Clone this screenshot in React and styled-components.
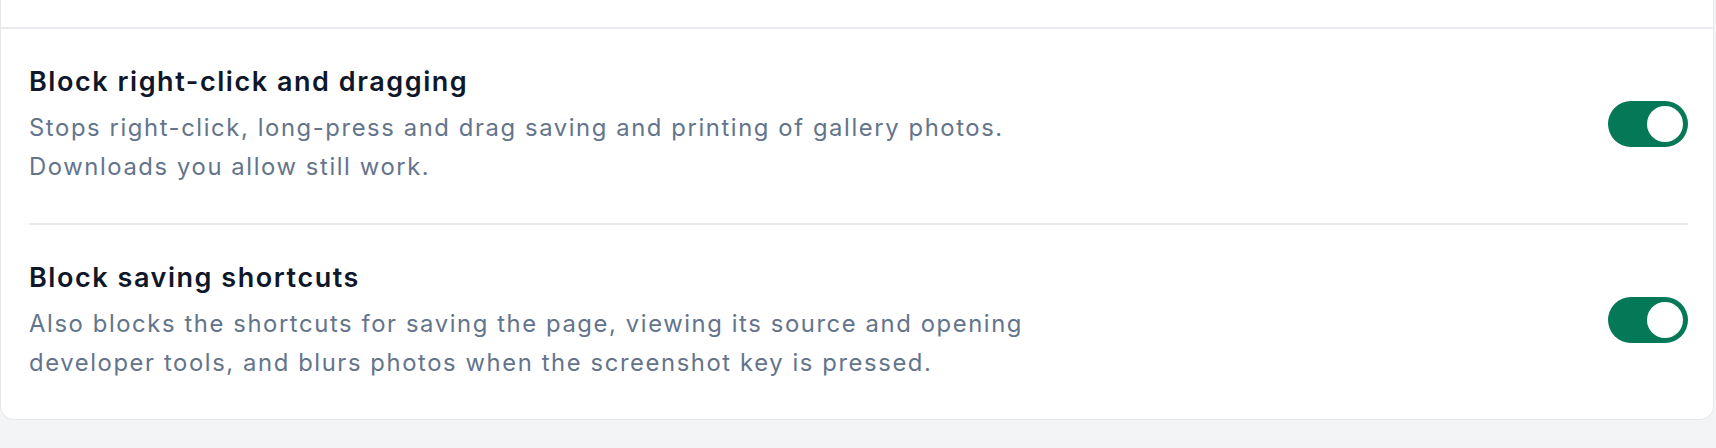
import { useState } from "react";
import styled, { createGlobalStyle } from "styled-components";

const GlobalStyle = createGlobalStyle`
  html, body {
    margin: 0;
    padding: 0;
    background: #f3f4f6;
    font-family: Inter, "Liberation Sans", Arial, sans-serif;
    -webkit-font-smoothing: antialiased;
  }
`;

const Page = styled.div`
  height: 448px;
  overflow: hidden;
`;

const Card = styled.section`
  margin-right: 2px;
  padding-top: 27px;
  background: #fff;
  border: 1px solid #e5e7eb;
  border-top: none;
  border-radius: 0 0 14px 14px;
`;

const List = styled.div`
  border-top: 2px solid #e8eaee;
  padding: 0 25px 0 28px;
`;

const Row = styled.div`
  display: flex;
  align-items: center;
  justify-content: space-between;
  gap: 40px;
  padding: 33px 0 37px;

  & + & {
    border-top: 2px solid #e8eaee;
  }
`;

const Text = styled.div`
  max-width: 1060px;
`;

const Title = styled.h3`
  margin: 0 0 6px;
  font-size: 27px;
  line-height: 40px;
  font-weight: 600;
  letter-spacing: 1.55px;
  color: #0f172a;
`;

const Desc = styled.p`
  margin: 0;
  font-size: 23.8px;
  line-height: 39px;
  font-weight: 400;
  letter-spacing: 1.6px;
  color: #64748b;
`;

const Switch = styled.button`
  flex: none;
  display: flex;
  align-items: center;
  justify-content: ${(p) => (p.$on ? "flex-end" : "flex-start")};
  width: 80px;
  height: 46px;
  padding: 0 5px;
  border: none;
  border-radius: 999px;
  background: ${(p) => (p.$on ? "#047857" : "#cbd5e1")};
  cursor: pointer;
`;

const Thumb = styled.span`
  width: 36px;
  height: 36px;
  border-radius: 50%;
  background: #fff;
`;

const settings = [
  {
    id: "drag",
    title: "Block right-click and dragging",
    desc: "Stops right-click, long-press and drag saving and printing of gallery photos. Downloads you allow still work.",
  },
  {
    id: "keys",
    title: "Block saving shortcuts",
    desc: "Also blocks the shortcuts for saving the page, viewing its source and opening developer tools, and blurs photos when the screenshot key is pressed.",
  },
];

export default function App() {
  const [on, setOn] = useState({ drag: true, keys: true });

  return (
    <Page>
      <GlobalStyle />
      <Card>
        <List>
          {settings.map((s) => (
            <Row key={s.id}>
              <Text>
                <Title>{s.title}</Title>
                <Desc>{s.desc}</Desc>
              </Text>
              <Switch
                role="switch"
                aria-checked={on[s.id]}
                $on={on[s.id]}
                onClick={() => setOn((o) => ({ ...o, [s.id]: !o[s.id] }))}
              >
                <Thumb />
              </Switch>
            </Row>
          ))}
        </List>
      </Card>
    </Page>
  );
}
